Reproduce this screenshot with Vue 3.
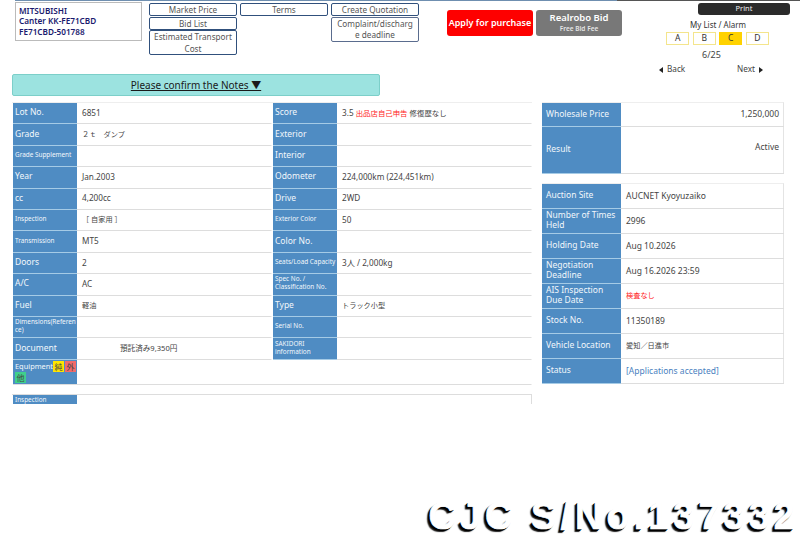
<template>
  <div class="page">
    <div class="topline"><i v-for="s in strip" :key="s" :class="s"></i></div>

    <header class="head">
      <div class="car">MITSUBISHI<br />Canter KK-FE71CBD<br />FE71CBD-501788</div>
      <div class="links col1">
        <a class="lnk">Market Price</a>
        <a class="lnk">Bid List</a>
        <a class="lnk tall">Estimated Transport Cost</a>
      </div>
      <div class="links col2">
        <a class="lnk">Terms</a>
      </div>
      <div class="links col3">
        <a class="lnk">Create Quotation</a>
        <a class="lnk tall dim">Complaint/discharge deadline</a>
      </div>
      <div class="btn apply">Apply for purchase</div>
      <div class="btn robo"><b>Realrobo Bid</b><span>Free Bid Fee</span></div>
      <div class="side">
        <div class="print">Print</div>
        <div class="mylist">My List / Alarm</div>
        <div class="alarms">
          <span v-for="a in alarms" :key="a" :class="{ on: a === 'C' }">{{ a }}</span>
        </div>
        <div class="count">6/25</div>
        <div class="nav">
          <span><i class="tri left"></i>Back</span>
          <span>Next<i class="tri right"></i></span>
        </div>
      </div>
    </header>

    <div class="notes">Please confirm the Notes ▼</div>

    <main class="content">
      <section class="leftcol">
        <div class="grid">
          <template v-for="r in leftRows" :key="r.a">
            <div class="lab" :class="r.as">{{ r.a }}</div>
            <div class="val" :class="r.ac">{{ r.av }}</div>
            <div class="lab" :class="r.bs">{{ r.b }}</div>
            <div class="val" :class="r.bc">
              <span v-if="r.a === 'Lot No.'">3.5 <em>出品店自己申告</em> <i>修復歴なし</i></span>
              <template v-else>{{ r.bv }}</template>
            </div>
          </template>
        </div>
        <div class="equip">
          <div class="lab eq">Equipment<span class="tag y">純</span><span class="tag r">外</span><span class="tag g">他</span></div>
          <div class="val"></div>
        </div>
        <div class="insp">
          <div class="lab xs">Inspection</div>
          <div class="val"></div>
        </div>
      </section>

      <section class="rightcol">
        <div class="rt">
          <div class="rlab">Wholesale Price</div>
          <div class="rval price">1,250,000</div>
          <div class="rlab big">Result</div>
          <div class="rval result">Active</div>
        </div>
        <div class="rt second">
          <template v-for="r in rightRows" :key="r.k">
            <div class="rlab">{{ r.k }}</div>
            <div class="rval" :class="r.c">{{ r.v }}</div>
          </template>
        </div>
      </section>
    </main>

    <div class="stamp">CJC S/No.137332</div>
  </div>
</template>

<script setup>
const strip = ['s1', 's2', 's3', 's4', 's5', 's6', 's7']
const alarms = ['A', 'B', 'C', 'D']

const leftRows = [
  { a: 'Lot No.', av: '6851', b: 'Score' },
  { a: 'Grade', av: '２ｔ　ダンプ', ac: 'ind', b: 'Exterior', bv: '' },
  { a: 'Grade Supplement', as: 'xs', av: '', b: 'Interior', bv: '' },
  { a: 'Year', av: 'Jan.2003', b: 'Odometer', bv: '224,000km (224,451km)' },
  { a: 'cc', av: '4,200cc', b: 'Drive', bv: '2WD' },
  { a: 'Inspection', as: 'xs', av: '［ 自家用 ］', ac: 'ind', b: 'Exterior Color', bs: 'xs', bv: '50' },
  { a: 'Transmission', as: 'xs', av: 'MT5', b: 'Color No.', bv: '' },
  { a: 'Doors', av: '2', b: 'Seats/Load Capacity', bs: 'xs', bv: '3人 / 2,000kg' },
  { a: 'A/C', av: 'AC', b: 'Spec No. / Classification No.', bs: 'xs', bv: '' },
  { a: 'Fuel', av: '軽油', ac: 'cjk', b: 'Type', bv: 'トラック小型', bc: 'cjk' },
  { a: 'Dimensions(Reference)', as: 'xs brk', av: '', b: 'Serial No.', bs: 'xs', bv: '' },
  { a: 'Document', av: '預託済み9,350円', ac: 'doc', b: 'SAKIDORI information', bs: 'xs', bv: '' },
]

const rightRows = [
  { k: 'Auction Site', v: 'AUCNET Kyoyuzaiko' },
  { k: 'Number of Times Held', v: '2996' },
  { k: 'Holding Date', v: 'Aug 10.2026' },
  { k: 'Negotiation Deadline', v: 'Aug 16.2026 23:59' },
  { k: 'AIS Inspection Due Date', v: '検査なし', c: 'red cjk' },
  { k: 'Stock No.', v: '11350189' },
  { k: 'Vehicle Location', v: '愛知／日進市', c: 'cjk' },
  { k: 'Status', v: '[Applications accepted]', c: 'blue' },
]
</script>

<style>
html, body { margin: 0; background: #fff; }
</style>

<style scoped>
.page {
  width: 800px;
  height: 536px;
  position: relative;
  overflow: hidden;
  background: #fff;
  color: #333;
  font-family: "Noto Sans", "Noto Sans CJK JP", sans-serif;
  font-size: 8.2px;
}

.topline { display: flex; height: 1px; }
.topline i { display: block; height: 1px; background: #6f8fb0; }
.topline .s1 { width: 15px; background: #fff; }
.topline .s2 { width: 88px; }
.topline .s3 { width: 105px; }
.topline .s4 { width: 105px; }
.topline .s5 { width: 104px; }
.topline .s6 { width: 200px; background: #6f8fb0; }
.topline .s7 { width: 183px; background: #555; }

.head { height: 73px; display: flex; align-items: flex-start; }
.car {
  margin: 1px 0 0 15px;
  width: 127px;
  height: 39px;
  box-sizing: border-box;
  border: 1px solid #bbb;
  padding: 2.5px 3px;
  color: #1a1a6e;
  font-weight: 600;
  font-size: 8.2px;
  line-height: 10.5px;
}
.links { width: 88px; display: flex; flex-direction: column; }
.col1 { margin: 2px 0 0 7px; }
.col2 { margin: 2px 0 0 3px; }
.col3 { margin: 2px 0 0 3px; }
.lnk {
  box-sizing: border-box;
  height: 13px;
  margin-bottom: 0.5px;
  border: 1px solid #30507c;
  border-radius: 2px;
  text-align: center;
  color: #555;
  font-size: 8.2px;
  line-height: 11px;
}
.lnk.tall { height: 25px; line-height: 11.5px; padding: 0 1px; }
.lnk.dim { border-color: #5a6c8e; word-break: break-all; padding: 0 4px; }
.btn {
  border-radius: 3px;
  color: #fff;
  height: 26px;
  margin-top: 9px;
  box-sizing: border-box;
  text-align: center;
}
.apply {
  margin-left: 28px;
  width: 86px;
  background: #fe0000;
  font-size: 9px;
  font-weight: 600;
  line-height: 26px;
  white-space: nowrap;
}
.robo {
  margin-left: 3px;
  width: 86px;
  background: #787878;
  display: flex;
  flex-direction: column;
  padding-top: 1px;
}
.robo b { font-size: 9.5px; line-height: 13px; font-weight: 600; }
.robo span { font-size: 6.5px; line-height: 9px; font-weight: 600; color: #e6e6e6; }

.side { margin-left: 23px; width: 150px; text-align: center; }
.print {
  margin: 2px 0 0 53px;
  width: 92px;
  height: 12px;
  border-radius: 3px;
  background: #2b2b2b;
  color: #eee;
  font-size: 7.5px;
  line-height: 11px;
}
.mylist { margin: 5px 0 0 -4px; font-size: 8px; line-height: 10px; color: #333; }
.alarms { display: flex; justify-content: center; gap: 3.5px; margin: 2px 0 0 -5px; }
.alarms span {
  box-sizing: border-box;
  width: 23px;
  height: 13px;
  border: 1px solid #f4e58c;
  background: #fff;
  font-size: 8.5px;
  line-height: 10px;
  color: #333;
}
.alarms span.on { background: #ffd200; border-color: #ffd200; }
.count { margin: 5px 0 0 -17px; font-size: 9px; line-height: 10px; color: #444; }
.nav {
  display: flex;
  justify-content: space-between;
  margin: 4px 0 0 0;
  padding: 0 32px 0 14px;
  line-height: 10px;
  color: #444;
}
.tri { display: inline-block; width: 0; height: 0; border-style: solid; border-color: transparent; border-width: 3.5px 0; vertical-align: -1px; }
.tri.left { border-right: 4px solid #222; margin-right: 4px; }
.tri.right { border-left: 4px solid #222; margin-left: 4px; }

.notes {
  margin-left: 12px;
  width: 368px;
  height: 22px;
  box-sizing: border-box;
  border: 1px solid #7ccfc9;
  border-radius: 2px;
  background: #9ce3e0;
  color: #1a1a1a;
  text-align: center;
  text-decoration: underline;
  font-size: 10px;
  line-height: 20px;
}

.content { display: flex; margin: 6px 0 0 12px; align-items: flex-start; }
.leftcol { width: 520px; }
.grid {
  display: grid;
  grid-template-columns: 65px 195px 65px 195px;
  grid-auto-rows: 21.42px;
  border-top: 1px solid #eee;
}
.lab {
  box-sizing: border-box;
  background: #4f8cc3;
  color: #f2f7fb;
  padding: 0 1px 2px 2px;
  margin-left: 1px;
  display: flex;
  align-items: center;
  border-bottom: 1px solid #a5cbe6;
  line-height: 8px;
  font-size: 8.5px;
}
.lab.xs { font-size: 6.4px; }
.lab.brk { word-break: break-all; line-height: 8.5px; }
.val {
  box-sizing: border-box;
  display: flex;
  align-items: center;
  white-space: pre;
  padding: 0 0 2px 5px;
  border-bottom: 1px solid #ddd;
  border-right: 1px solid transparent;
  color: #444;
}
.val em { font-style: normal; color: #f22; font-size: 7.4px; }
.val i { font-style: normal; font-size: 7.4px; }
.val.ind { font-size: 7.2px; }
.val.cjk { font-size: 7.2px; }
.val.doc { padding-left: 43px; font-size: 7.6px; }

.equip { display: grid; grid-template-columns: 65px 455px; height: 24px; }
.lab.eq {
  display: block;
  padding-top: 1px;
  padding-bottom: 0;
  font-size: 7.4px;
  line-height: 11.5px;
  word-break: break-all;
  border-bottom: 1px solid #ddd;
}
.tag { display: inline-block; width: 11px; height: 11px; line-height: 11px; text-align: center; color: #444; vertical-align: top; font-size: 8px; }
.tag.y { background: #ffe600; }
.tag.r { background: #f06a6a; margin-left: 1px; }
.tag.g { background: #3fd08c; }

.insp { display: grid; grid-template-columns: 65px 455px; height: 9px; margin-top: 10px; overflow: hidden; border-top: 1px solid #ddd; }
.insp .lab { align-items: flex-start; border-bottom: 0; line-height: 9px; padding-bottom: 0; }
.insp .val { border-bottom: 0; border-right: 1px solid #ddd; }

.rightcol { margin-left: 10px; width: 242px; }
.rt {
  display: grid;
  grid-template-columns: 79px 163px;
  border-top: 1px solid #eee;
  border-right: 1px solid #e4e4e4;
  box-sizing: border-box;
  width: 242px;
}
.rt.second { margin-top: 9px; grid-auto-rows: 25px; }
.rt:not(.second) { grid-template-rows: 24px 47px; }
.rlab {
  box-sizing: border-box;
  display: flex;
  align-items: center;
  background: #4f8cc3;
  color: #f2f7fb;
  padding: 0 4px 2px;
  line-height: 10px;
  font-size: 8.5px;
  border-bottom: 1px solid #a5cbe6;
}
.rval {
  box-sizing: border-box;
  display: flex;
  align-items: center;
  padding: 0 5px 2px;
  border-bottom: 1px solid #ddd;
  color: #444;
  font-size: 8.5px;
}
.rval.price { justify-content: flex-end; }
.rval.result { justify-content: flex-end; align-items: flex-start; padding-top: 14px; }
.rval.red { color: #f22; }
.rval.blue { color: #4a7fc0; }
.rval.cjk { font-size: 7.2px; }

.stamp {
  position: absolute;
  right: 1px;
  bottom: 0;
  color: #fff;
  font-family: "Liberation Sans", sans-serif;
  font-size: 38px;
  font-weight: 700;
  letter-spacing: 4px;
  line-height: 36px;
  padding-bottom: 2px;
  white-space: nowrap;
  -webkit-text-stroke: 0.7px #fff;
  text-shadow: -1px 1px 0 #000, -2px 2px 0 #000, -3px 3px 1px #222;
}
</style>
